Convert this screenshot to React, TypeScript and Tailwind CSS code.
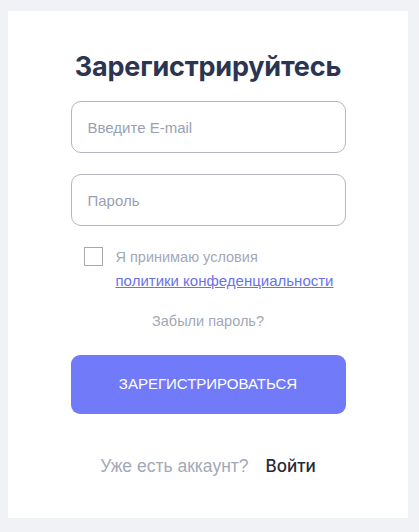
import React, { useState } from "react";

export default function App() {
  const [email, setEmail] = useState("");
  const [password, setPassword] = useState("");
  const [agree, setAgree] = useState(false);

  return (
    <div className="min-h-[532px] bg-[#f1f2f6] px-2 pt-[11px] pb-[15px] font-['Inter',sans-serif]">
      <div className="w-[400px] bg-white flex flex-col items-center pt-[40px] pb-[40px]">
        <h1 className="text-[27px] leading-[32px] font-bold text-[#2b3552] tracking-[-0.2px]">
          Зарегистрируйтесь
        </h1>

        <div className="mt-[18px] flex flex-col gap-[21px] w-[275px]">
          <input
            className="h-[52px] w-full rounded-[10px] border border-[#b4b6bf] px-4 text-[15px] font-['Liberation_Sans',sans-serif] text-[#2c3550] placeholder:text-[#9aa1b5] outline-none"
            value={email}
            onChange={(e) => setEmail(e.target.value)}
            placeholder="Введите E-mail"
            type="text"
          />
          <input
            className="h-[52px] w-full rounded-[10px] border border-[#b4b6bf] px-4 text-[15px] font-['Liberation_Sans',sans-serif] text-[#2c3550] placeholder:text-[#9aa1b5] outline-none"
            value={password}
            onChange={(e) => setPassword(e.target.value)}
            placeholder="Пароль"
            type="password"
          />
        </div>

        <div className="mt-[20px] w-[275px] flex items-start gap-[13px] pl-[13px] font-['Liberation_Sans',sans-serif]">
          <button
            onClick={() => setAgree(!agree)}
            className="mt-[1px] w-[19px] h-[19px] border border-[#a5a8b2] bg-white shrink-0 flex"
          >
            {agree && <span className="block w-[9px] h-[9px] m-auto bg-[#717bf9]" />}
          </button>
          <div className="text-[15px] leading-[23px]">
            <div className="text-[#a3a8b8] text-[14.5px]">Я принимаю условия</div>
            <a className="text-[#6b72e8] underline cursor-pointer">политики конфеденциальности</a>
          </div>
        </div>

        <a className="mt-[19px] text-[14.5px] leading-[20px] text-[#a3a8b8] font-['Liberation_Sans',sans-serif] cursor-pointer">
          Забыли пароль?
        </a>

        <button className="mt-[24px] w-[275px] h-[59px] rounded-[9px] bg-[#717bf9] text-white text-[15px] font-['Liberation_Sans',sans-serif]">
          ЗАРЕГИСТРИРОВАТЬСЯ
        </button>

        <div className="mt-[40px] flex items-center gap-[17px] text-[17.5px] leading-[24px] font-['Liberation_Sans',sans-serif]">
          <span className="text-[#a3a8b8]">Уже есть аккаунт?</span>
          <a className="text-[#262a3a] font-medium cursor-pointer font-['Inter',sans-serif] text-[17px]">Войти</a>
        </div>
      </div>
    </div>
  );
}
